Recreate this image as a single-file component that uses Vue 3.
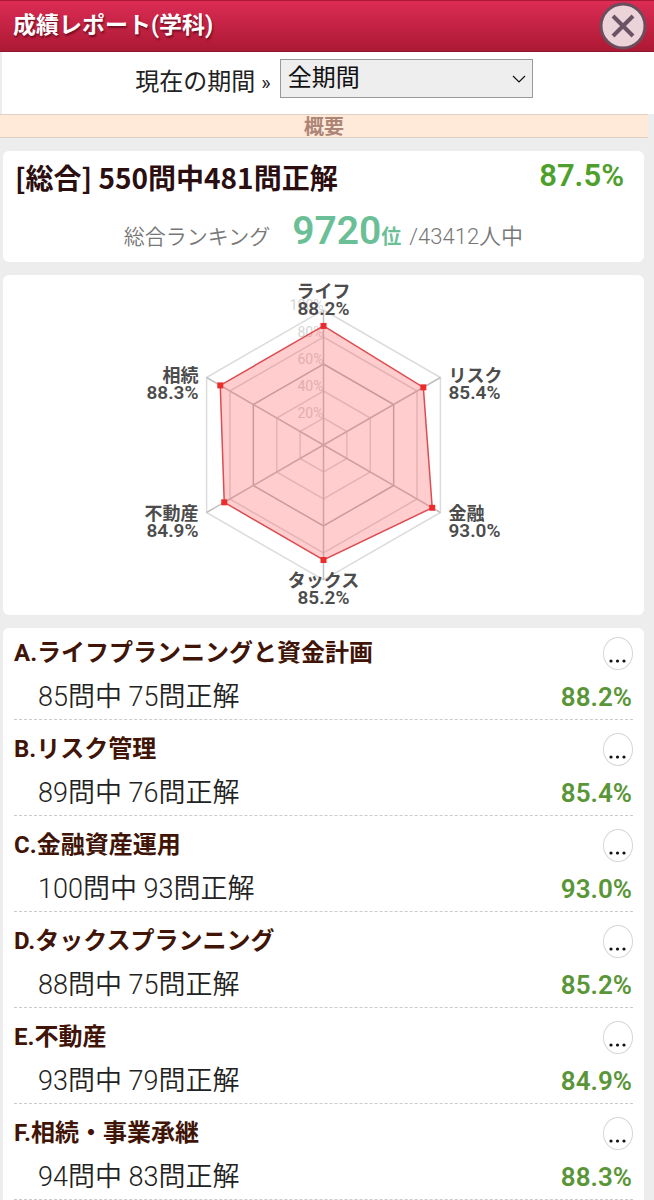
<script setup>
import { ref } from 'vue'

const period = ref('all')

const subjects = [
  { key: 'A', name: 'ライフプランニングと資金計画', total: 85, correct: 75, rate: 88.2 },
  { key: 'B', name: 'リスク管理', total: 89, correct: 76, rate: 85.4 },
  { key: 'C', name: '金融資産運用', total: 100, correct: 93, rate: 93.0 },
  { key: 'D', name: 'タックスプランニング', total: 88, correct: 75, rate: 85.2 },
  { key: 'E', name: '不動産', total: 93, correct: 79, rate: 84.9 },
  { key: 'F', name: '相続・事業承継', total: 94, correct: 83, rate: 88.3 },
]

const cx = 320
const cy = 170
const radius = 135

function point(index, percent) {
  const angle = (Math.PI / 3) * index - Math.PI / 2
  const r = (radius * percent) / 100
  return [cx + r * Math.cos(angle), cy + r * Math.sin(angle)]
}

function hexagon(percents) {
  return percents.map((p, i) => point(i, p).join(',')).join(' ')
}

const rings = [20, 40, 60, 80, 100]
const spokes = [0, 1, 2, 3, 4, 5].map((i) => point(i, 100))
const rates = subjects.map((s) => s.rate)
const markers = rates.map((r, i) => point(i, r))

const labels = [
  { name: 'ライフ', x: 320, y: 23, anchor: 'middle' },
  { name: 'リスク', x: 445, y: 107, anchor: 'start' },
  { name: '金融', x: 445, y: 245, anchor: 'start' },
  { name: 'タックス', x: 320, y: 312, anchor: 'middle' },
  { name: '不動産', x: 195, y: 245, anchor: 'end' },
  { name: '相続', x: 195, y: 107, anchor: 'end' },
]
</script>

<template>
  <div class="page">
    <header class="bar">
      <h1>成績レポート(学科)</h1>
      <button class="close" type="button" aria-label="閉じる">
        <svg viewBox="0 0 48 48" aria-hidden="true">
          <circle cx="24" cy="24" r="22" />
          <path d="M14 14 L34 34 M34 14 L14 34" />
        </svg>
      </button>
    </header>

    <div class="filter">
      <label for="period">現在の期間 <span class="arrow">»</span></label>
      <div class="picker">
        <select id="period" v-model="period">
          <option value="all">全期間</option>
        </select>
        <svg viewBox="0 0 14 8" aria-hidden="true"><path d="M1 1 L7 7 L13 1" /></svg>
      </div>
    </div>

    <h2 class="band">概要</h2>

    <section class="card summary">
      <div class="overall">
        <h3>[総合] 550問中481問正解</h3>
        <strong>87.5%</strong>
      </div>
      <p class="ranking">
        <span>総合ランキング</span>
        <span class="rank"><b>9720</b>位</span>
        <span class="entrants">/43412人中</span>
      </p>
    </section>

    <section class="card chart">
      <svg viewBox="0 0 640 340" role="img" aria-label="分野別正解率">
        <g class="scale">
          <text v-for="r in rings" :key="r" :x="cx" :y="cy - (radius * r) / 100">{{ r }}%</text>
        </g>
        <polygon
          v-for="r in rings"
          :key="r"
          class="ring"
          :class="{ strong: r === 60 }"
          :points="hexagon([r, r, r, r, r, r])"
        />
        <line v-for="(s, i) in spokes" :key="i" class="spoke" :x1="cx" :y1="cy" :x2="s[0]" :y2="s[1]" />
        <polygon class="area" :points="hexagon(rates)" />
        <rect v-for="(m, i) in markers" :key="i" class="marker" :x="m[0] - 3" :y="m[1] - 3" width="6" height="6" />
        <g v-for="(l, i) in labels" :key="l.name" class="label" :text-anchor="l.anchor">
          <text :x="l.x" :y="l.y">{{ l.name }}</text>
          <text class="rate" :x="l.x" :y="l.y + 17">{{ rates[i].toFixed(1) }}%</text>
        </g>
      </svg>
    </section>

    <ul class="card list">
      <li v-for="s in subjects" :key="s.key">
        <div class="head">
          <h3>{{ s.key }}.{{ s.name }}</h3>
          <button type="button" :aria-label="s.name + 'の詳細'">
            <svg viewBox="0 0 28 31" aria-hidden="true">
              <circle cx="7" cy="23" r="1.6" />
              <circle cx="13.5" cy="23" r="1.6" />
              <circle cx="20" cy="23" r="1.6" />
            </svg>
          </button>
        </div>
        <div class="result">
          <span>{{ s.total }}問中 {{ s.correct }}問正解</span>
          <strong>{{ s.rate.toFixed(1) }}%</strong>
        </div>
      </li>
    </ul>
  </div>
</template>

<style>
body {
  margin: 0;
  background: #ededed;
}
</style>

<style scoped>
.page {
  display: flex;
  flex-direction: column;
  min-height: 100vh;
  background: #ededed;
  color: #222;
  font-family: Roboto, "Noto Sans CJK JP", sans-serif;
}

h1,
h2,
h3,
p,
ul {
  margin: 0;
  padding: 0;
}

.bar {
  display: flex;
  align-items: center;
  justify-content: space-between;
  box-sizing: border-box;
  height: 52px;
  padding: 0 7px 0 13px;
  border-top: 1px solid #a81a38;
  border-bottom: 1px solid #8c1830;
  background: linear-gradient(#dc2c55, #ac1933);
}

.bar h1 {
  color: #fff;
  font-size: 23px;
  line-height: 46px;
  text-shadow: 1px 2px 2px rgba(60, 0, 15, 0.6);
}

.close {
  width: 48px;
  height: 48px;
  padding: 0;
  border: 0;
  background: none;
}

.close svg {
  display: block;
}

.close circle {
  fill: #ecd3da;
  stroke: #6b4d5d;
  stroke-width: 3;
}

.close path {
  fill: none;
  stroke: #6b5363;
  stroke-width: 4;
}

.filter {
  display: flex;
  align-items: flex-start;
  justify-content: center;
  gap: 9px;
  box-sizing: border-box;
  height: 62px;
  margin: 0 0 0 2px;
  padding: 7px 0 0 12px;
  background: #fff;
}

.filter label {
  font-size: 24px;
  line-height: 46px;
}

.arrow {
  font-size: 20px;
}

.picker {
  position: relative;
  width: 253px;
}

.picker select {
  display: block;
  box-sizing: border-box;
  width: 100%;
  height: 39px;
  padding: 0 7px 1px;
  border: 1px solid #999;
  border-radius: 0;
  appearance: none;
  background: #eee;
  color: #111;
  font: 24px Roboto, "Noto Sans CJK JP", sans-serif;
}

.picker svg {
  position: absolute;
  right: 7px;
  top: 16px;
  width: 14px;
  height: 8px;
  fill: none;
  stroke: #111;
  stroke-width: 1.2;
  pointer-events: none;
}

.band {
  margin-right: 6px;
  padding-top: 2px;
  border-top: 1px solid #e4d0c2;
  border-bottom: 1px solid #e4d0c2;
  background: #ffe9d9;
  color: #ad8577;
  font-size: 20px;
  line-height: 20px;
  text-align: center;
}

.card {
  margin: 13px 10px 0 3px;
  border-radius: 6px;
  background: #fff;
}

.summary {
  padding: 0 20px 0 12px;
  height: 111px;
}

.overall {
  display: flex;
  justify-content: space-between;
  line-height: 52px;
}

.overall h3 {
  color: #2b0f10;
  font-family: "Noto Sans CJK JP", sans-serif;
  font-size: 28px;
}

.overall strong {
  color: #4f9f2c;
  font-size: 31px;
  font-weight: 600;
  line-height: 50px;
}

.ranking {
  display: flex;
  align-items: baseline;
  justify-content: center;
  gap: 8px;
  padding-left: 8px;
  color: #777;
  font-size: 21px;
  font-weight: 350;
  line-height: 56px;
}

.rank {
  margin-left: 14px;
  color: #6bbf96;
  font-size: 20px;
  font-weight: 700;
}

.rank b {
  font-size: 39px;
  font-weight: 600;
}

.entrants {
  font-size: 22px;
}

.chart svg {
  display: block;
  width: 100%;
  height: 340px;
}

.ring,
.spoke {
  fill: none;
  stroke: #dcdcdc;
  stroke-width: 1.5;
}

.ring.strong {
  stroke: #b8b8b8;
}

.spoke {
  stroke: #c0c0c0;
}

.area {
  fill: rgba(255, 70, 75, 0.27);
  stroke: #dc4c50;
  stroke-width: 1.5;
}

.marker {
  fill: #ea2c2c;
}

.scale text {
  fill: #d5d5d5;
  font-size: 14px;
  text-anchor: end;
}

.label text {
  fill: #4c4c4c;
  font-size: 18px;
  font-weight: 700;
}

.label .rate {
  font-size: 19px;
  font-weight: 600;
}

.list {
  flex: 1;
  padding: 0 11px;
  border-radius: 6px 6px 0 0;
  list-style: none;
}

.list li {
  padding-top: 8px;
  border-bottom: 1px dashed #ccc;
}

.list li:first-child {
  padding-top: 4px;
}

.head,
.result {
  display: flex;
  align-items: center;
  justify-content: space-between;
}

.head {
  height: 42px;
}

.head h3 {
  color: #401508;
  font-size: 24px;
  line-height: 40px;
}

.head button {
  box-sizing: border-box;
  width: 30px;
  height: 33px;
  padding: 0;
  border: 1px solid #d6d6d6;
  border-radius: 50%;
  background: #fff;
}

.head svg {
  display: block;
  fill: #111;
}

.result {
  box-sizing: border-box;
  height: 45px;
  padding: 2px 1px 0 24px;
  font-size: 27px;
  line-height: 43px;
}

.result span {
  font-weight: 350;
}

.result strong {
  color: #5a9638;
  font-size: 26px;
  font-weight: 600;
}
</style>
